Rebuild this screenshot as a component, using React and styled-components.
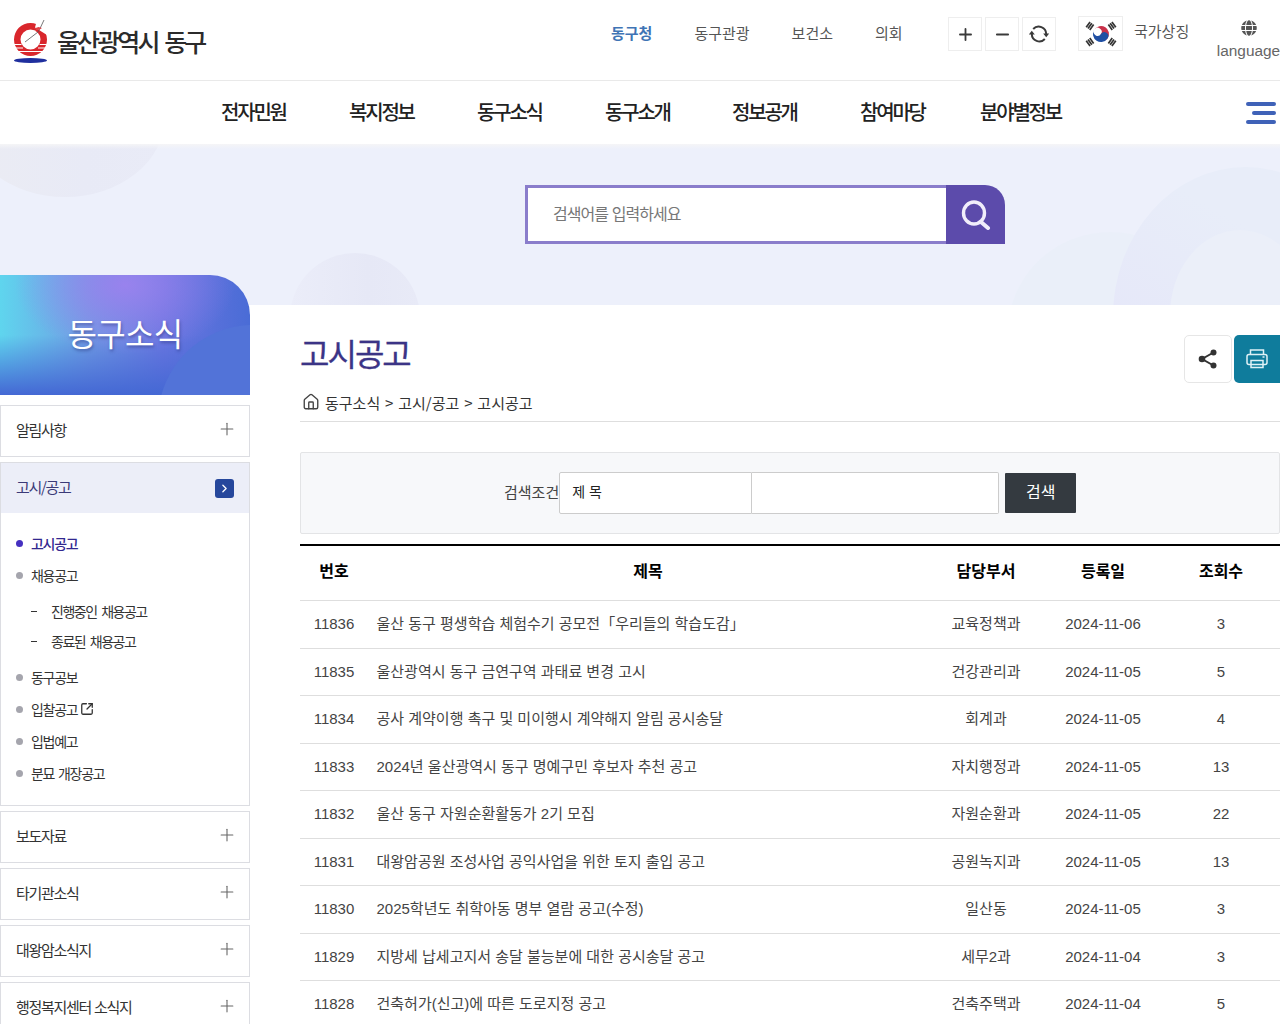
import React from 'react'
import styled, { createGlobalStyle } from 'styled-components'
import { Plus, Minus, ChevronRight, SquareArrowOutUpRight, House } from 'lucide-react'
import { FaGlobe } from 'react-icons/fa'

const GlobalStyle = createGlobalStyle`
  html, body { margin: 0; padding: 0; background: #fff; }
  body { font-family: "Liberation Sans", "Noto Sans CJK KR", sans-serif; color: #333; }
  * { box-sizing: border-box; }
`

const Page = styled.div`
  width: 1280px;
  height: 1024px;
  overflow: hidden;
  position: relative;
`
const TopBar = styled.header`
  height: 81px;
  border-bottom: 1px solid #e9e9e9;
  display: flex;
  align-items: flex-start;
`
const LogoLink = styled.a`
  display: flex;
  align-items: flex-start;
  gap: 9px;
  margin: 20px 0 0 14px;
  width: 448px;
`
const LogoText = styled.span`
  font-family: "Noto Sans CJK KR", sans-serif;
  font-size: 25px;
  line-height: 36px;
  margin-top: 3px;
  font-weight: 500;
  letter-spacing: -2.9px;
  color: #2b2b2b;
  word-spacing: 4px;
`
const SiteLinks = styled.ul`
  list-style: none;
  margin: 0;
  padding: 22px 0 0;
  width: 337px;
  margin-left: 149px;
  display: flex;
`
const SiteLink = styled.li`
  font-family: "Noto Sans CJK KR", sans-serif;
  font-size: 15px;
  line-height: 22px;
  font-weight: ${p => (p.$active ? 700 : 400)};
  color: ${p => (p.$active ? '#3f74b5' : '#555')};
  margin-right: 42px;
`
const ZoomGroup = styled.div`
  display: flex;
  gap: 3px;
  margin-top: 17px;
  width: 130px;
`
const ZoomButton = styled.button`
  width: 34px;
  height: 34px;
  padding: 0;
  background: #fff;
  border: 1px solid #eee;
  color: #3a3a3a;
  display: flex;
  align-items: center;
  justify-content: center;
`
const FlagBox = styled.div`
  width: 45px;
  height: 35px;
  margin-top: 16px;
  border: 1px solid #eee;
  display: flex;
  align-items: center;
  justify-content: center;
`
const FlagLabel = styled.span`
  font-family: "Noto Sans CJK KR", sans-serif;
  font-size: 15px;
  line-height: 22px;
  color: #555;
  margin: 20px 0 0 11px;
  width: 83px;
`
const Language = styled.div`
  width: 63px;
  flex: none;
  display: flex;
  flex-direction: column;
  align-items: center;
  padding-top: 20px;
  color: #666;
  font-size: 15.4px;
  line-height: 18px;
  gap: 6px;
`
const MainNav = styled.nav`
  height: 63px;
  position: relative;
  display: flex;
  align-items: center;
  padding: 0 0 3px 221px;
`
const NavItem = styled.a`
  font-family: "Noto Sans CJK KR", sans-serif;
  font-size: 20px;
  font-weight: 500;
  letter-spacing: -2.2px;
  color: #222;
  width: ${p => p.$w || 128}px;
`
const Burger = styled.div`
  position: absolute;
  left: 1246px;
  top: 21px;
  width: 30px;
  display: flex;
  flex-direction: column;
  align-items: flex-end;
  gap: 5px;
`
const BurgerBar = styled.i`
  display: block;
  height: 4px;
  border-radius: 2px;
  width: ${p => p.$w}px;
  background: #3f62b8;
`
const Hero = styled.section`
  height: 161px;
  background: #edf0fb;
  position: relative;
  overflow: hidden;
  padding: 41px 0 0 525px;
  &::before {
    content: '';
    position: absolute;
    inset: 0 0 auto 0;
    height: 5px;
    background: linear-gradient(#f5f5f7, rgba(237,240,251,0));
    z-index: 1;
  }
`
const Blob = styled.i`
  position: absolute;
  border-radius: 50%;
  left: ${p => p.$x}px;
  top: ${p => p.$y}px;
  width: ${p => p.$w}px;
  height: ${p => p.$h}px;
  background: ${p => p.$c};
`
const SearchBox = styled.form`
  position: relative;
  width: 480px;
  height: 59px;
  display: flex;
`
const SearchField = styled.div`
  flex: 1;
  border: 3px solid #8a7dcb;
  border-right: 0;
  background: #fff;
  font-family: "Noto Sans CJK KR", sans-serif;
  font-size: 16px;
  letter-spacing: -0.95px;
  word-spacing: 1px;
  color: #777;
  display: flex;
  align-items: center;
  padding: 0 0 4px 25px;
`
const SearchButton = styled.button`
  width: 59px;
  border: 0;
  padding: 0;
  background: #5c4bab;
  border-top-right-radius: 20px;
  display: flex;
  align-items: center;
  justify-content: center;
`
const Body = styled.div`
  display: flex;
`
const Side = styled.aside`
  width: 250px;
  flex: none;
  margin-top: -30px;
  position: relative;
`
const SideBanner = styled.div`
  height: 120px;
  border-top-right-radius: 40px;
  position: relative;
  overflow: hidden;
  margin-bottom: 10px;
  background:
    radial-gradient(ellipse 110px 70px at 125px 10px, rgba(155,130,238,.95), rgba(155,130,238,0)),
    linear-gradient(90deg, #5fd5ee 0%, #6f9de3 35%, #6a76e0 65%, #4a6cd6 100%);
  display: flex;
  align-items: center;
  justify-content: center;
  color: #fff;
  font-family: "Noto Sans CJK KR", sans-serif;
  font-size: 32px;
  letter-spacing: -0.7px;
  text-shadow: 1px 2px 3px rgba(40,50,120,.5);
  padding-bottom: 6px;
  &::before {
    content: '';
    position: absolute;
    inset: auto 0 0 0;
    height: 60px;
    background: linear-gradient(rgba(68,104,212,0), #4468d4);
  }
  &::after {
    content: '';
    position: absolute;
    left: 158px;
    top: 50px;
    width: 190px;
    height: 190px;
    border-radius: 50%;
    background: #5273d8;
  }
`
const BannerTitle = styled.span`
  position: relative;
  z-index: 1;
`
const SideGroup = styled.div`
  border: 1px solid #dcdde2;
  margin-bottom: 5px;
  background: #fff;
`
const SideHead = styled.div`
  height: 50px;
  display: flex;
  align-items: center;
  justify-content: space-between;
  font-family: "Noto Sans CJK KR", sans-serif;
  font-size: 15px;
  letter-spacing: -1.3px;
  word-spacing: 1px;
  color: ${p => (p.$open ? '#3b3a78' : '#333')};
  background: ${p => (p.$open ? '#eceef8' : '#fff')};
  padding: ${p => (p.$open ? '0 15px 3px' : '0 12px 4px 15px')};
`
const OpenMark = styled.span`
  width: 19px;
  height: 19px;
  margin-top: 3px;
  border-radius: 3px;
  background: #26479c;
  color: #fff;
  display: flex;
  align-items: center;
  justify-content: center;
`
const SubList = styled.ul`
  list-style: none;
  margin: 0;
  padding: 14px 0 16px 15px;
`
const SubItem = styled.li`
  display: flex;
  align-items: center;
  height: 32px;
  font-family: "Noto Sans CJK KR", sans-serif;
  font-size: 14px;
  letter-spacing: -1.3px;
  word-spacing: 2px;
  white-space: pre;
  font-weight: ${p => (p.$active ? 500 : 400)};
  color: ${p => (p.$active ? '#32288f' : '#333')};
  &::before {
    content: '';
    width: 7px;
    height: 7px;
    border-radius: 50%;
    margin-right: 8px;
    background: ${p => (p.$active ? '#4530c0' : '#a5a5ad')};
  }
`
const ExternalMark = styled(SquareArrowOutUpRight)`
  margin-left: 3px;
`
const DepthList = styled.ul`
  list-style: none;
  margin: 0;
  padding: 5px 0;
`
const DepthItem = styled.li`
  display: flex;
  align-items: center;
  height: 30px;
  padding-left: 15px;
  font-family: "Noto Sans CJK KR", sans-serif;
  font-size: 14px;
  letter-spacing: -1.5px;
  word-spacing: 3px;
  color: #333;
  &::before {
    content: '';
    width: 6px;
    height: 1px;
    background: #333;
    margin-right: 14px;
  }
`
const Main = styled.main`
  flex: 1;
  margin-left: 50px;
  position: relative;
  min-width: 0;
`
const TitleRow = styled.div`
  height: 75px;
  padding-top: 24px;
  display: flex;
  align-items: flex-start;
  justify-content: space-between;
`
const PageTitle = styled.h1`
  margin: 0;
  font-family: "Noto Sans CJK KR", sans-serif;
  font-size: 32px;
  line-height: 46px;
  font-weight: 400;
  letter-spacing: -2px;
  color: #3b3486;
  -webkit-text-stroke: 0.3px #3b3486;
`
const ToolButtons = styled.div`
  display: flex;
  gap: 2px;
  margin-top: 6px;
`
const ToolButton = styled.button`
  width: ${p => (p.$print ? 46 : 48)}px;
  height: 48px;
  padding: 0;
  display: flex;
  align-items: center;
  justify-content: center;
  border: ${p => (p.$print ? '0' : '1px solid #e6e6e6')};
  border-radius: ${p => (p.$print ? '5px 0 0 5px' : '5px')};
  background: ${p => (p.$print ? '#0f7c9c' : '#fff')};
`
const Crumbs = styled.div`
  height: 42px;
  border-bottom: 1px solid #dedede;
  display: flex;
  align-items: center;
  gap: 5px;
  padding: 3px 0 0 2px;
  font-family: "Noto Sans CJK KR", sans-serif;
  font-size: 15px;
  word-spacing: 1.5px;
  color: #333;
`
const FilterPanel = styled.form`
  margin-top: 30px;
  height: 82px;
  background: #f7f8fa;
  border: 1px solid #e3e4e6;
  border-radius: 2px;
  display: flex;
  align-items: center;
  padding: 0 0 0 203px;
`
const FilterLabel = styled.label`
  font-size: 15px;
  color: #444;
  padding-bottom: 3px;
`
const FilterSelect = styled.div`
  width: 193px;
  height: 42px;
  background: #fff;
  border: 1px solid #ccc;
  border-radius: 2px 0 0 2px;
  display: flex;
  align-items: center;
  padding: 0 0 4px 12px;
  font-size: 14px;
  color: #222;
`
const FilterInput = styled.div`
  width: 247px;
  height: 42px;
  background: #fff;
  border: 1px solid #ccc;
  border-left: 0;
  border-radius: 0 2px 2px 0;
`
const FilterButton = styled.button`
  width: 71px;
  height: 40px;
  margin-left: 6px;
  border: 0;
  border-radius: 1px;
  background: #343a40;
  color: #fff;
  padding: 0 0 5px;
  font-family: "Liberation Sans", "Noto Sans CJK KR", sans-serif;
  font-size: 16px;
`
const Board = styled.div`
  margin-top: 10px;
  border-top: 2px solid #000;
`
const Row = styled.div`
  display: grid;
  grid-template-columns: 68px 560px 116px 118px 118px;
  align-items: center;
  height: ${p => (p.$head ? '55px' : '47.5px')};
  border-bottom: 1px solid #dedede;
  font-size: 15px;
  line-height: 22px;
  color: #444;
  ${p => p.$head && 'font-weight: 700; font-size: 16px; color: #000;'}
  padding-bottom: ${p => (p.$head ? 2 : 0.5)}px;
`
const Cell = styled.div`
  text-align: ${p => (p.$left ? 'left' : 'center')};
  ${p => p.$left && 'padding-left: 8.5px;'}
  white-space: nowrap;
`

const Logo = () => (
  <svg width="34" height="44" viewBox="0 0 34 44">
    <ellipse cx="16.500" cy="40.500" rx="16.500" ry="2.400" fill="#1f2f9e" />
    <path d="M16.500 3a16.500 16.500 0 1 0 16.500 16.500A16.500 16.500 0 0 0 16.500 3zm0 6.500a10 10 0 1 1-10 10 10 10 0 0 1 10-10z" fill="#d9262c" />
    <path d="M0 24.500h7.500M25.500 24.500h8M1 28h8M24 28h9M3 31.500h28" stroke="#fff" strokeWidth="1.200" />
    <path d="M21 7.500 33 15 33 0 23 0z" fill="#fff" />
    <path d="M17 13c3-2 6-4 8-4.500l3.500 1.500-2-2.500z" fill="#fff" />
    <path d="M11 22 24 12l1.500-2.500L30 0" fill="none" stroke="#555" strokeWidth=".8" />
    <path d="M20 8.500l5 1.500 3-2-3.500-1z" fill="#e04046" />
  </svg>
)

const Flag = () => (
  <svg width="38" height="30" viewBox="0 0 38 30">
    <g transform="translate(19 15) rotate(33)">
      <path d="M-8 0a8 8 0 0 1 16 0 4 4 0 0 1-8 0 4 4 0 0 0-8 0z" fill="#c9314a" />
      <path d="M-8 0a8 8 0 0 0 16 0 4 4 0 0 0-8 0 4 4 0 0 1-8 0z" fill="#1f4fa3" />
    </g>
    <g transform="translate(19 15)" stroke="#333" strokeWidth="1.700">
      {[-36, 36, 144, 216].map(a => (
        <path key={a} transform={`rotate(${a})`} d="M11.500-3.300v6.600M13.700-3.300v6.600M15.900-3.300v6.600" />
      ))}
    </g>
  </svg>
)

const SyncIcon = () => (
  <svg width="20" height="20" viewBox="0 0 20 20" fill="none" stroke="#3a3a3a" strokeWidth="2">
    <path d="M17.200 10A7.500 7.500 0 0 0 4.200 5" />
    <path d="M2.800 10a7.500 7.500 0 0 0 13 5" />
    <path d="M14.200 9.500h6l-3 3.800zM-.200 10.500h6l-3-3.800z" fill="#3a3a3a" stroke="none" />
  </svg>
)

const SearchIcon = () => (
  <svg width="30" height="30" viewBox="0 0 30 30" fill="none" stroke="#f1eefb">
    <ellipse cx="13" cy="13" rx="10.500" ry="11" strokeWidth="3.400" />
    <path d="M20 22l7 6" strokeWidth="4" strokeLinecap="round" />
  </svg>
)

const ShareIcon = () => (
  <svg width="20" height="20" viewBox="0 0 20 20" fill="#333" stroke="#333">
    <path d="M15.500 3.500 4 10l11.500 6.500" fill="none" strokeWidth="2" />
    <circle cx="15.500" cy="3.500" r="3" stroke="none" />
    <circle cx="4" cy="10" r="3.300" stroke="none" />
    <circle cx="15.500" cy="16.500" r="3" stroke="none" />
  </svg>
)

const PrintIcon = () => (
  <svg width="22" height="20" viewBox="0 0 22 20" fill="none" stroke="#dff1f6" strokeWidth="1.500">
    <path d="M4.500 5.500V1h13v4.500" />
    <rect x="1" y="5.500" width="20" height="10" rx="2" />
    <path d="M5 15v-3.500h12V15M5 15v3.500h12V15" />
    <path d="M16.500 8h2" />
  </svg>
)

const rows = [
  ['11836', '울산 동구 평생학습 체험수기 공모전「우리들의 학습도감」', '교육정책과', '2024-11-06', '3'],
  ['11835', '울산광역시 동구 금연구역 과태료 변경 고시', '건강관리과', '2024-11-05', '5'],
  ['11834', '공사 계약이행 촉구 및 미이행시 계약해지 알림 공시송달', '회계과', '2024-11-05', '4'],
  ['11833', '2024년 울산광역시 동구 명예구민 후보자 추천 공고', '자치행정과', '2024-11-05', '13'],
  ['11832', '울산 동구 자원순환활동가 2기 모집', '자원순환과', '2024-11-05', '22'],
  ['11831', '대왕암공원 조성사업 공익사업을 위한 토지 출입 공고', '공원녹지과', '2024-11-05', '13'],
  ['11830', '2025학년도 취학아동 명부 열람 공고(수정)', '일산동', '2024-11-05', '3'],
  ['11829', '지방세 납세고지서 송달 불능분에 대한 공시송달 공고', '세무2과', '2024-11-04', '3'],
  ['11828', '건축허가(신고)에 따른 도로지정 공고', '건축주택과', '2024-11-04', '5'],
]

const navItems = [['전자민원'], ['복지정보'], ['동구소식'], ['동구소개', 127], ['정보공개'], ['참여마당', 120], ['분야별정보']]
const closedAfter = ['보도자료', '타기관소식', '대왕암소식지', '행정복지센터 소식지']

const SideClosed = ({ label }) => (
  <SideGroup>
    <SideHead>
      {label}
      <Plus size={20} strokeWidth={1.3} color="#666" />
    </SideHead>
  </SideGroup>
)

export default function App() {
  return (
    <Page>
      <GlobalStyle />
      <TopBar>
        <LogoLink>
          <Logo />
          <LogoText>울산광역시 동구</LogoText>
        </LogoLink>
        <SiteLinks>
          <SiteLink $active>동구청</SiteLink>
          <SiteLink>동구관광</SiteLink>
          <SiteLink>보건소</SiteLink>
          <SiteLink>의회</SiteLink>
        </SiteLinks>
        <ZoomGroup>
          <ZoomButton><Plus size={19} strokeWidth={2.3} /></ZoomButton>
          <ZoomButton><Minus size={19} strokeWidth={2.6} /></ZoomButton>
          <ZoomButton><SyncIcon /></ZoomButton>
        </ZoomGroup>
        <FlagBox><Flag /></FlagBox>
        <FlagLabel>국가상징</FlagLabel>
        <Language>
          <FaGlobe size={16} color="#555" />
          <span>language</span>
        </Language>
      </TopBar>
      <MainNav>
        {navItems.map(([label, w]) => (
          <NavItem key={label} $w={w}>{label}</NavItem>
        ))}
        <Burger>
          <BurgerBar $w={30} />
          <BurgerBar $w={24} />
          <BurgerBar $w={30} />
        </Burger>
      </MainNav>
      <Hero>
        <Blob $x={-35} $y={-107} $w={200} $h={160} $c="linear-gradient(90deg, #ebecf3, #e8eaf6 60%, #e9ebf7)" />
        <Blob $x={290} $y={109} $w={130} $h={130} $c="linear-gradient(90deg, #ebedf9, #e6e8f6 60%, #e8eaf7)" />
        <Blob $x={1008} $y={88} $w={205} $h={200} $c="#eaeff9" />
        <Blob $x={1113} $y={23} $w={265} $h={300} $c="linear-gradient(30deg, #e5e6f9 20%, #e8edf9 70%)" />
        <Blob $x={1170} $y={86} $w={140} $h={170} $c="#ebeff9" />
        <SearchBox>
          <SearchField>검색어를 입력하세요</SearchField>
          <SearchButton type="button"><SearchIcon /></SearchButton>
        </SearchBox>
      </Hero>
      <Body>
        <Side>
          <SideBanner><BannerTitle>동구소식</BannerTitle></SideBanner>
          <SideClosed label="알림사항" />
          <SideGroup>
            <SideHead $open>
              고시/공고
              <OpenMark><ChevronRight size={13} strokeWidth={2.4} /></OpenMark>
            </SideHead>
            <SubList>
              <SubItem $active>고시공고</SubItem>
              <SubItem>채용공고</SubItem>
              <DepthList>
                <DepthItem>진행중인 채용공고</DepthItem>
                <DepthItem>종료된 채용공고</DepthItem>
              </DepthList>
              <SubItem>동구공보</SubItem>
              <SubItem>
                입찰공고
                <ExternalMark size={14} strokeWidth={2.2} />
              </SubItem>
              <SubItem>입법예고</SubItem>
              <SubItem>분묘 개장공고</SubItem>
            </SubList>
          </SideGroup>
          {closedAfter.map(label => <SideClosed key={label} label={label} />)}
        </Side>
        <Main>
          <TitleRow>
            <PageTitle>고시공고</PageTitle>
            <ToolButtons>
              <ToolButton><ShareIcon /></ToolButton>
              <ToolButton $print><PrintIcon /></ToolButton>
            </ToolButtons>
          </TitleRow>
          <Crumbs>
            <House size={18} strokeWidth={1.8} color="#444" />
            <span>동구소식 &gt; 고시/공고 &gt; 고시공고</span>
          </Crumbs>
          <FilterPanel>
            <FilterLabel>검색조건</FilterLabel>
            <FilterSelect>제 목</FilterSelect>
            <FilterInput />
            <FilterButton type="button">검색</FilterButton>
          </FilterPanel>
          <Board>
            <Row $head>
              <Cell>번호</Cell>
              <Cell>제목</Cell>
              <Cell>담당부서</Cell>
              <Cell>등록일</Cell>
              <Cell>조회수</Cell>
            </Row>
            {rows.map(r => (
              <Row key={r[0]}>
                <Cell>{r[0]}</Cell>
                <Cell $left>{r[1]}</Cell>
                <Cell>{r[2]}</Cell>
                <Cell>{r[3]}</Cell>
                <Cell>{r[4]}</Cell>
              </Row>
            ))}
          </Board>
        </Main>
      </Body>
    </Page>
  )
}
